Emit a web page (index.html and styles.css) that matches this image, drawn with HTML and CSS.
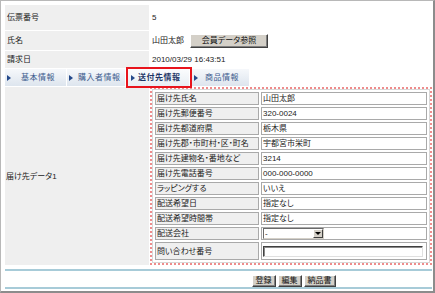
FILE: index.html
```html
<!DOCTYPE html>
<html lang="ja">
<head>
  <meta charset="UTF-8" />
  <title>受注詳細 - 送付先情報</title>
  <link rel="stylesheet" href="styles.css">
</head>
<body>

<div class="frame">
  <table class="order">
    <tr class="r-slip">
      <th class="lbl">伝票番号</th>
      <td>5</td>
    </tr>
    <tr class="r-name">
      <th class="lbl">氏名</th>
      <td>山田太郎<button type="button" class="btn btn-ref">会員データ参照</button></td>
    </tr>
    <tr class="r-date">
      <th class="lbl">請求日</th>
      <td>2010/03/29 16:43:51</td>
    </tr>
    <tr class="r-tabs">
      <td colspan="2">
        <ul class="tabs">
          <li class="tab tab-basic">基本情報</li>
          <li class="tab tab-buyer">購入者情報</li>
          <li class="tab tab-ship active">送付先情報</li>
          <li class="tab tab-item">商品情報</li>
        </ul>
      </td>
    </tr>
    <tr class="r-dest">
      <th class="lbl">届け先データ1</th>
      <td class="dest-box">
        <table class="dest">
          <tr><th>届け先氏名</th><td>山田太郎</td></tr>
          <tr><th>届け先郵便番号</th><td>320-0024</td></tr>
          <tr><th>届け先都道府県</th><td>栃木県</td></tr>
          <tr><th>届け先郡・市町村・区・町名</th><td>宇都宮市栄町</td></tr>
          <tr><th>届け先建物名・番地など</th><td>3214</td></tr>
          <tr><th>届け先電話番号</th><td>000-000-0000</td></tr>
          <tr><th>ラッピングする</th><td>いいえ</td></tr>
          <tr><th>配送希望日</th><td>指定なし</td></tr>
          <tr><th>配送希望時間帯</th><td>指定なし</td></tr>
          <tr>
            <th>配送会社</th>
            <td>
              <span class="select">
                <select id="carrier"><option>-</option></select>
                <span class="arrow"></span>
              </span>
            </td>
          </tr>
          <tr class="r-track">
            <th>問い合わせ番号</th>
            <td><input type="text" id="tracking" class="track" /></td>
          </tr>
        </table>
      </td>
    </tr>
  </table>

  <div class="actions">
    <button type="button" class="btn">登録</button>
    <button type="button" class="btn">編集</button>
    <button type="button" class="btn">納品書</button>
  </div>
</div>

</body>
</html>
```

FILE: styles.css
```css
* {
  box-sizing: border-box;
}

body {
  margin: 0;
  font-family: "Liberation Sans", "Noto Sans CJK JP", sans-serif;
  font-size: 8px;
  font-feature-settings: "palt";
  color: #222;
  background: #fff;
}

.frame {
  width: 435px;
  height: 293px;
  border-top: 1px solid #b8b8b8;
  border-left: 1px solid #b8b8b8;
  border-right: 2px solid #8c8c8c;
  border-bottom: 2px solid #8c8c8c;
  padding: 3px 0 0 3px;
  overflow: hidden;
}

/* outer table */
.order {
  width: 429px;
  border-collapse: separate;
  border-spacing: 1px;
}

.order th,
.order td {
  padding: 0 2px;
  font-weight: normal;
  text-align: left;
  line-height: 11px;
  vertical-align: middle;
  white-space: nowrap;
}

.order th.lbl {
  width: 144px;
  background: #efefef;
}

.r-slip th, .r-slip td { height: 25px; }
.r-name th, .r-name td { height: 19px; }
.r-date th, .r-date td { height: 17px; }

.r-dest th.lbl {
  padding-left: 1px;
}

/* buttons */
.btn {
  font: inherit;
  font-size: 8px;
  color: #111;
  background: #d4d0c8;
  border: 1px solid;
  border-color: #fff #404040 #404040 #fff;
  box-shadow: inset -1px -1px #808080;
  height: 12px;
  line-height: 10px;
  padding: 0 3px;
  margin: 0;
  cursor: pointer;
}

.btn-ref {
  width: 78px;
  height: 14px;
  margin-left: 6px;
  vertical-align: middle;
}

/* tabs */
.r-tabs td {
  padding: 0;
  height: 17px;
}

.tabs {
  display: flex;
  list-style: none;
  margin: 0;
  padding: 0;
  height: 17px;
}

.tab {
  display: flex;
  align-items: center;
  padding-left: 2px;
  background: linear-gradient(#f6f8fb, #dde5ee);
  border-right: 1px solid #fff;
  color: #3d5c8e;
  letter-spacing: 0.5px;
}

.tab::before {
  content: "";
  border-left: 4px solid #24498a;
  border-top: 3px solid transparent;
  border-bottom: 3px solid transparent;
  margin-right: 5px;
}

.tab-basic { width: 62px; }
.tab-basic::before { margin-right: 10px; }
.tab-buyer { width: 59px; }
.tab-ship { width: 62px; margin-left: 2px; padding-left: 3px; }
.tab-ship::before { margin-right: 3px; }
.tab-item { width: 58px; margin-left: 2px; }
.tab-item::before { margin-right: 7px; }

.tab.active {
  background: linear-gradient(#fbfcfd, #e8eef4);
  color: #1d3566;
  font-weight: bold;
  outline: 2px solid #e8141c;
}

/* delivery data */
.order td.dest-box {
  border: 2px dotted #ee8c8c;
  padding: 0;
  vertical-align: top;
}

.dest {
  width: 100%;
  border: 1px solid #d8d8d8;
  border-collapse: separate;
  border-spacing: 2px;
}

.dest th,
.dest td {
  height: 13px;
  border: 1px solid #a9a9a9;
  padding: 0 1px;
  font-weight: normal;
  text-align: left;
  line-height: 11px;
  white-space: nowrap;
}

.dest th {
  width: 104px;
  background: #efefef;
}

.dest .r-track th,
.dest .r-track td {
  height: 18px;
}

.select {
  display: inline-flex;
  width: 61px;
  height: 11px;
  border: 1px solid;
  border-color: #6a6a6a #d4d0c8 #d4d0c8 #6a6a6a;
  background: #fff;
  vertical-align: middle;
}

.select select {
  -webkit-appearance: none;
  appearance: none;
  flex: 1;
  min-width: 0;
  height: 9px;
  border: 0;
  padding: 0 1px;
  font: inherit;
  line-height: 9px;
  color: #222;
  background: #fff;
}

.select .arrow {
  display: flex;
  align-items: center;
  justify-content: center;
  width: 10px;
  height: 9px;
  background: #d4d0c8;
  border: 1px solid;
  border-color: #fff #404040 #404040 #fff;
}

.select .arrow::before {
  content: "";
  border-top: 3px solid #000;
  border-left: 3px solid transparent;
  border-right: 3px solid transparent;
}

.track {
  width: 160px;
  height: 11px;
  padding: 0;
  border: 1px solid;
  border-color: #404040 #e0e0e0 #e0e0e0 #404040;
  box-shadow: inset 1px 1px #8a8a8a;
  vertical-align: middle;
  font: inherit;
}

/* bottom buttons */
.actions {
  display: flex;
  justify-content: center;
  align-items: flex-start;
  gap: 2px;
  height: 20px;
  margin: 3px 1px 0 1px;
  padding: 4px 0 0 150px;
  border-top: 2px solid #a7cbd8;
  border-bottom: 2px solid #a7cbd8;
}
```
